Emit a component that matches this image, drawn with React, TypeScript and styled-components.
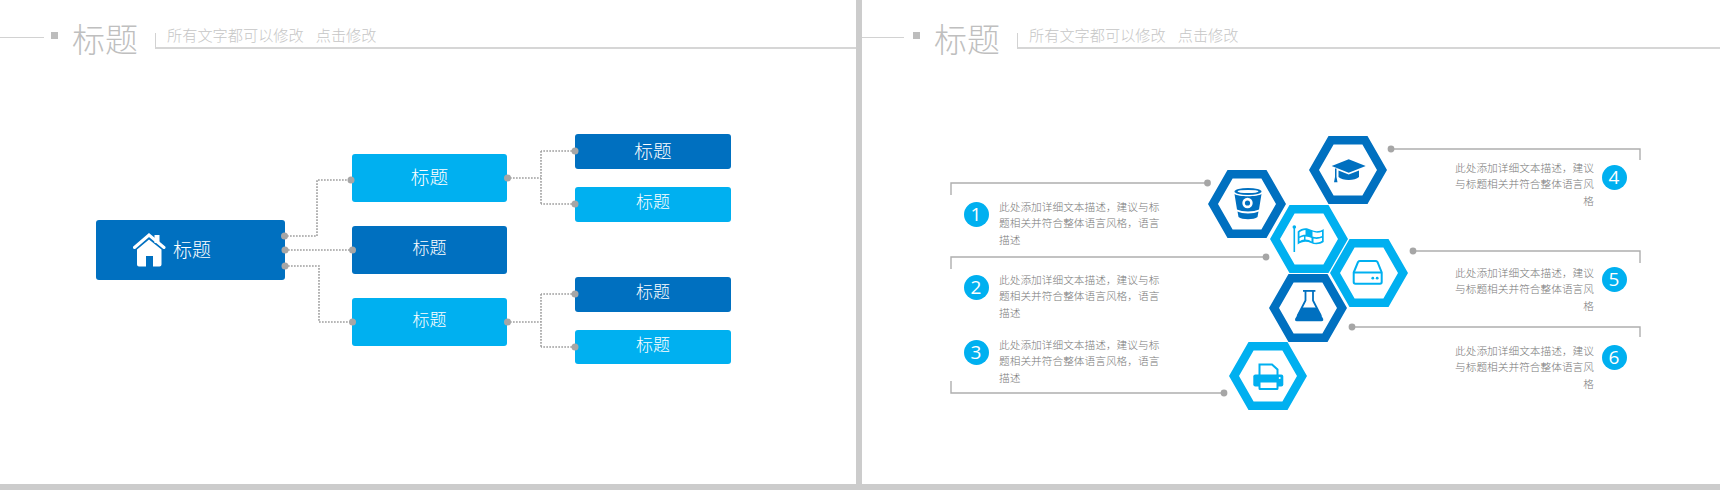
import React from "react";
import styled, { createGlobalStyle } from "styled-components";

const DARK = "#0070c0";
const LIGHT = "#00b0f0";
const DOT = "#a6a6a6";
const CJK = `"Noto Sans CJK SC", "Noto Sans", sans-serif`;
const HEADER = 60;
const COMMA = "\uFF0C";

const Global = createGlobalStyle`
  html, body { margin: 0; padding: 0; background: #cccccc; }
  body { font-family: ${CJK}; }
`;

const Page = styled.div`
  width: 1720px;
  height: 490px;
  display: flex;
  gap: 6px;
  align-items: flex-start;
  background: #cccccc;
  overflow: hidden;
`;

const Slide = styled.section<{ $w: number }>`
  width: ${(p) => p.$w}px;
  height: 484px;
  background: #ffffff;
  display: flex;
  flex-direction: column;
  flex: none;
`;

const Header = styled.header`
  height: ${HEADER}px;
  display: flex;
  align-items: flex-start;
  flex: none;
`;

const Lead = styled.div<{ $w: number; $gap: number }>`
  width: ${(p) => p.$w}px;
  height: 1px;
  margin-top: 37px;
  margin-right: ${(p) => p.$gap}px;
  background: #d2d2d2;
`;

const Square = styled.div`
  width: 7px;
  height: 7px;
  margin-top: 32px;
  margin-right: 14px;
  background: #bdbdbd;
`;

const Title = styled.h1`
  margin: 20px 17px 0 0;
  font-size: 33px;
  line-height: 36px;
  font-weight: 300;
  color: #bfbfbf;
  font-family: ${CJK};
`;

const Rule = styled.div`
  flex: 1;
  height: 14px;
  margin-top: 33px;
  border-left: 1px solid #d2d2d2;
  border-bottom: 2px solid #d6d6d6;
  display: flex;
  gap: 12px;
  padding-left: 11px;
`;

const Sub = styled.span`
  margin-top: -8px;
  font-size: 15.2px;
  line-height: 18px;
  height: 18px;
  font-weight: 300;
  color: #c6c6c6;
  white-space: nowrap;
`;

const Canvas = styled.div`
  position: relative;
  flex: 1;
`;

const Overlay = styled.svg`
  position: absolute;
  inset: 0;
  display: block;
  overflow: visible;
`;

const Box = styled.div<{ $x: number; $y: number; $w: number; $h: number; $dark?: boolean; $size: number; $lift: number }>`
  position: absolute;
  left: ${(p) => p.$x}px;
  top: ${(p) => p.$y - HEADER}px;
  width: ${(p) => p.$w}px;
  height: ${(p) => p.$h}px;
  box-sizing: border-box;
  padding-bottom: ${(p) => p.$lift}px;
  border-radius: 3px;
  background: ${(p) => (p.$dark ? DARK : LIGHT)};
  color: #ffffff;
  display: flex;
  align-items: center;
  justify-content: center;
  font-size: ${(p) => p.$size}px;
  font-weight: 300;
`;

const RootBox = styled(Box)`
  justify-content: flex-start;
  padding-left: 37px;
  gap: 7px;
`;

const RootLabel = styled.span`
  margin-bottom: 4px;
`;

const Note = styled.div<{ $x: number; $y: number; $right?: boolean }>`
  position: absolute;
  left: ${(p) => p.$x}px;
  top: ${(p) => p.$y - HEADER}px;
  display: flex;
  align-items: flex-start;
  flex-direction: ${(p) => (p.$right ? "row-reverse" : "row")};
  gap: ${(p) => (p.$right ? 7.5 : 10.5)}px;
`;

const Badge = styled.div<{ $offset: number }>`
  width: 25px;
  height: 25px;
  flex: none;
  margin-top: ${(p) => p.$offset}px;
  border-radius: 50%;
  background: ${LIGHT};
  color: #ffffff;
  font-family: "Open Sans", sans-serif;
  font-size: 19px;
  line-height: 25px;
  text-align: center;
`;

const NoteText = styled.p<{ $right?: boolean }>`
  margin: 0;
  width: ${(p) => (p.$right ? 145 : 166)}px;
  font-size: 10.7px;
  line-height: 16.3px;
  font-weight: 300;
  color: #787878;
  text-align: ${(p) => (p.$right ? "right" : "left")};
`;

const HexWrap = styled.div<{ $x: number; $y: number }>`
  position: absolute;
  left: ${(p) => p.$x}px;
  top: ${(p) => p.$y - HEADER}px;
  width: 78px;
  height: 68px;
`;

const HexSvg = styled.svg`
  display: block;
`;

const SlideHeader = ({ lead, gap }: { lead: number; gap: number }) => (
  <Header>
    <Lead $w={lead} $gap={gap} />
    <Square />
    <Title>标题</Title>
    <Rule>
      <Sub>所有文字都可以修改</Sub>
      <Sub>点击修改</Sub>
    </Rule>
  </Header>
);

const HomeIcon = () => (
  <svg width="33" height="34" viewBox="0 0 33 34" fill="#fff">
    <rect x="21.5" y="2" width="5" height="8" />
    <path d="M1.5 14.5 L16 2 L31 14.5" fill="none" stroke="#fff" strokeWidth="3" strokeLinecap="round" />
    <path d="M4 16.5 L16 6.5 L28.5 16.5 V31.5 Q28.5 33.5 26.5 33.5 H20 V23 H13 V33.5 H6 Q4 33.5 4 31.5 Z" />
  </svg>
);

const Bucket = () => (
  <g fill={DARK}>
    <path d="M26.5 24 C30 27 50 27 53.5 24 L51 39.5 C46 42 34 42 29 39.5 Z" />
    <ellipse cx="40" cy="21.5" rx="13.5" ry="3.5" />
    <ellipse cx="40" cy="21.5" rx="10.5" ry="1.6" fill="#fff" />
    <path d="M29.5 41.5 C34 44 46 44 50.5 41.5 L49.5 47 C46 50 34 50 30.5 47 Z" />
    <circle cx="39.5" cy="33" r="5.2" fill="#fff" />
    <circle cx="39.5" cy="33" r="2.6" />
  </g>
);

const Cap = () => (
  <g fill={DARK}>
    <path d="M22.7 30 L39.7 23.3 L56.7 30 L39.7 36.7 Z" />
    <path d="M29.5 34.5 L39.7 38.5 L50 34.5 V41 C46 45 33.5 45 29.5 41 Z" />
    <path d="M26 32.5 H27.5 V41 L28.5 46.3 H25 L26 41 Z" />
  </g>
);

const Flag = () => (
  <g>
    <circle cx="24.3" cy="22" r="1.8" fill={LIGHT} />
    <rect x="23.5" y="22" width="1.6" height="25" fill={LIGHT} />
    <path
      d="M27.7 26.5 C32 22.5 37 22.5 41 24.8 C45 27 50 26.5 53.7 24 V37 C50 39.5 45 40 41 38 C37 36 32 36 27.7 39.5 Z"
      fill={LIGHT}
    />
    <g fill="#fff">
      <path d="M29.5 27.2 C31 26 33 25 35.5 24.9 V29.7 C33 29.7 31 30.4 29.5 31.4 Z" />
      <path d="M42.5 26.6 C45 28 49 28 52 26.8 V31 C49 32.5 45 32.5 42.5 31.5 Z" />
      <path d="M35.5 31.4 C38 31.4 40 32.2 41.5 33 V36.5 C40 35.5 38 34.7 35.5 34.6 Z" />
      <path d="M29.5 33 C31 32.2 32.5 31.8 34 31.6 V34.6 C32.5 34.8 31 35.3 29.5 36.3 Z" />
      <path d="M43.5 33.4 C46 34.2 49 34 52 32.8 V35.8 C49 37.8 46 38 43.5 37.5 Z" />
    </g>
  </g>
);

const Drive = () => (
  <g fill="none" stroke={LIGHT} strokeWidth="2">
    <path d="M23.7 33.5 L28 23 Q28.8 22 30 22 H45.5 Q46.7 22 47.5 23 L51.7 33.5 V43 Q51.7 44.7 50 44.7 H25.4 Q23.7 44.7 23.7 43 Z" />
    <path d="M23.7 33.5 H51.7" />
    <circle cx="42.8" cy="39.2" r="1.4" fill={LIGHT} stroke="none" />
    <circle cx="47.2" cy="39.2" r="1.4" fill={LIGHT} stroke="none" />
  </g>
);

const Flask = () => (
  <g>
    <rect x="34" y="16" width="12.4" height="1.8" fill={DARK} />
    <path d="M36.5 17 V26.5 L28.5 42 M44 17 V26.5 L52 42" fill="none" stroke={DARK} strokeWidth="1.8" />
    <path d="M33 33.5 H47.6 L54 44.5 Q55 47.3 52.5 47.3 H27.8 Q25.3 47.3 26.3 44.5 Z" fill={DARK} />
  </g>
);

const Printer = () => (
  <g>
    <path d="M30.5 33 V22.5 H43 L48.5 27.5 V33" fill="none" stroke={LIGHT} strokeWidth="2" />
    <rect x="24.3" y="32.5" width="30" height="12" rx="2" fill={LIGHT} />
    <circle cx="50.7" cy="36" r="1" fill="#fff" />
    <rect x="30.5" y="39.5" width="18" height="7.5" rx="0.5" fill="#fff" stroke={LIGHT} strokeWidth="2" />
  </g>
);

const Hexagon = ({ x, y, color, children }: { x: number; y: number; color: string; children: React.ReactNode }) => (
  <HexWrap $x={x} $y={y}>
    <HexSvg width="78" height="68" viewBox="0 0 78 68">
      <path
        fillRule="evenodd"
        fill={color}
        d="M0 34 L19.5 0 H58.5 L78 34 L58.5 68 H19.5 Z M10 34 L24.6 59.5 H53.4 L68 34 L53.4 8.5 H24.6 Z"
      />
      {children}
    </HexSvg>
  </HexWrap>
);

const wires = [
  "M284 236 H317 V180 H351",
  "M285 250 H352",
  "M285 266 H319 V322 H352",
  "M507 178 H541 M541 151 V204 M575 151 H541 M575 204 H541",
  "M507 322 H541 M541 294 V347 M575 294 H541 M575 347 H541",
];
const wireDots: [number, number][] = [
  [284.5, 236], [285, 250], [285, 266], [351, 180], [352.5, 250], [352.5, 322],
  [507.5, 178], [507.5, 322], [575, 151], [575, 204], [575, 294], [575, 347],
];

const branches = [
  { x: 352, y: 154, w: 155, h: 48, dark: false, size: 18.7, lift: 6 },
  { x: 352, y: 226, w: 155, h: 48, dark: true, size: 17, lift: 8 },
  { x: 352, y: 298, w: 155, h: 48, dark: false, size: 17, lift: 8 },
  { x: 575, y: 134, w: 156, h: 35, dark: true, size: 18.7, lift: 4 },
  { x: 575, y: 187, w: 156, h: 35, dark: false, size: 17, lift: 9 },
  { x: 575, y: 277, w: 156, h: 35, dark: true, size: 17, lift: 9 },
  { x: 575, y: 330, w: 156, h: 34, dark: false, size: 17, lift: 8 },
];

const leaders = [
  "M951 195 V183 H1207",
  "M951 269 V257 H1266",
  "M951 381 V393 H1224",
  "M1391 149 H1640 V160",
  "M1413 251 H1640 V263",
  "M1352 327 H1640 V337",
];
const leaderDots: [number, number][] = [
  [1207.5, 183], [1266, 257], [1224, 393], [1391, 149], [1413, 251], [1352, 327],
];

const LEFT_COPY = `此处添加详细文本描述${COMMA}建议与标题相关并符合整体语言风格${COMMA}语言描述`;
const RIGHT_COPY = `此处添加详细文本描述${COMMA}建议与标题相关并符合整体语言风格`;

const notes = [
  { n: 1, x: 963.5, y: 199, offset: 2.5, right: false },
  { n: 2, x: 963.5, y: 272, offset: 2.5, right: false },
  { n: 3, x: 963.5, y: 337, offset: 2.5, right: false },
  { n: 4, x: 1449, y: 160, offset: 4.5, right: true },
  { n: 5, x: 1449, y: 265, offset: 1.5, right: true },
  { n: 6, x: 1449, y: 343, offset: 1.5, right: true },
];

const SECOND = 862;

export default function App() {
  return (
    <Page>
      <Global />
      <Slide $w={856}>
        <SlideHeader lead={44} gap={7} />
        <Canvas>
          <Overlay width="856" height="424" viewBox={`0 ${HEADER} 856 424`}>
            {wires.map((d) => (
              <path key={d} d={d} fill="none" stroke="#a0a0a0" strokeWidth="1.6" strokeDasharray="1.7 1.3" />
            ))}
          </Overlay>
          <RootBox $x={96} $y={220} $w={189} $h={60} $dark $size={19} $lift={0}>
            <HomeIcon />
            <RootLabel>标题</RootLabel>
          </RootBox>
          {branches.map((b) => (
            <Box key={`${b.x}-${b.y}`} $x={b.x} $y={b.y} $w={b.w} $h={b.h} $dark={b.dark} $size={b.size} $lift={b.lift}>
              标题
            </Box>
          ))}
          <Overlay width="856" height="424" viewBox={`0 ${HEADER} 856 424`}>
            {wireDots.map(([cx, cy]) => (
              <circle key={`${cx}-${cy}`} cx={cx} cy={cy} r="3.5" fill={DOT} />
            ))}
          </Overlay>
        </Canvas>
      </Slide>
      <Slide $w={858}>
        <SlideHeader lead={42} gap={9} />
        <Canvas>
          <Overlay width="858" height="424" viewBox={`${SECOND} ${HEADER} 858 424`}>
            {leaders.map((d) => (
              <path key={d} d={d} fill="none" stroke="#aeaeae" strokeWidth="1.4" />
            ))}
            {leaderDots.map(([cx, cy]) => (
              <circle key={`${cx}-${cy}`} cx={cx} cy={cy} r="3.4" fill={DOT} />
            ))}
          </Overlay>
          {notes.map((n) => (
            <Note key={n.n} $x={n.x - SECOND} $y={n.y} $right={n.right}>
              <Badge $offset={n.offset}>{n.n}</Badge>
              <NoteText $right={n.right}>{n.right ? RIGHT_COPY : LEFT_COPY}</NoteText>
            </Note>
          ))}
          <Hexagon x={1208 - SECOND} y={170} color={DARK}><Bucket /></Hexagon>
          <Hexagon x={1309 - SECOND} y={136} color={DARK}><Cap /></Hexagon>
          <Hexagon x={1270 - SECOND} y={205} color={LIGHT}><Flag /></Hexagon>
          <Hexagon x={1330 - SECOND} y={239} color={LIGHT}><Drive /></Hexagon>
          <Hexagon x={1269 - SECOND} y={274} color={DARK}><Flask /></Hexagon>
          <Hexagon x={1229 - SECOND} y={342} color={LIGHT}><Printer /></Hexagon>
        </Canvas>
      </Slide>
    </Page>
  );
}
